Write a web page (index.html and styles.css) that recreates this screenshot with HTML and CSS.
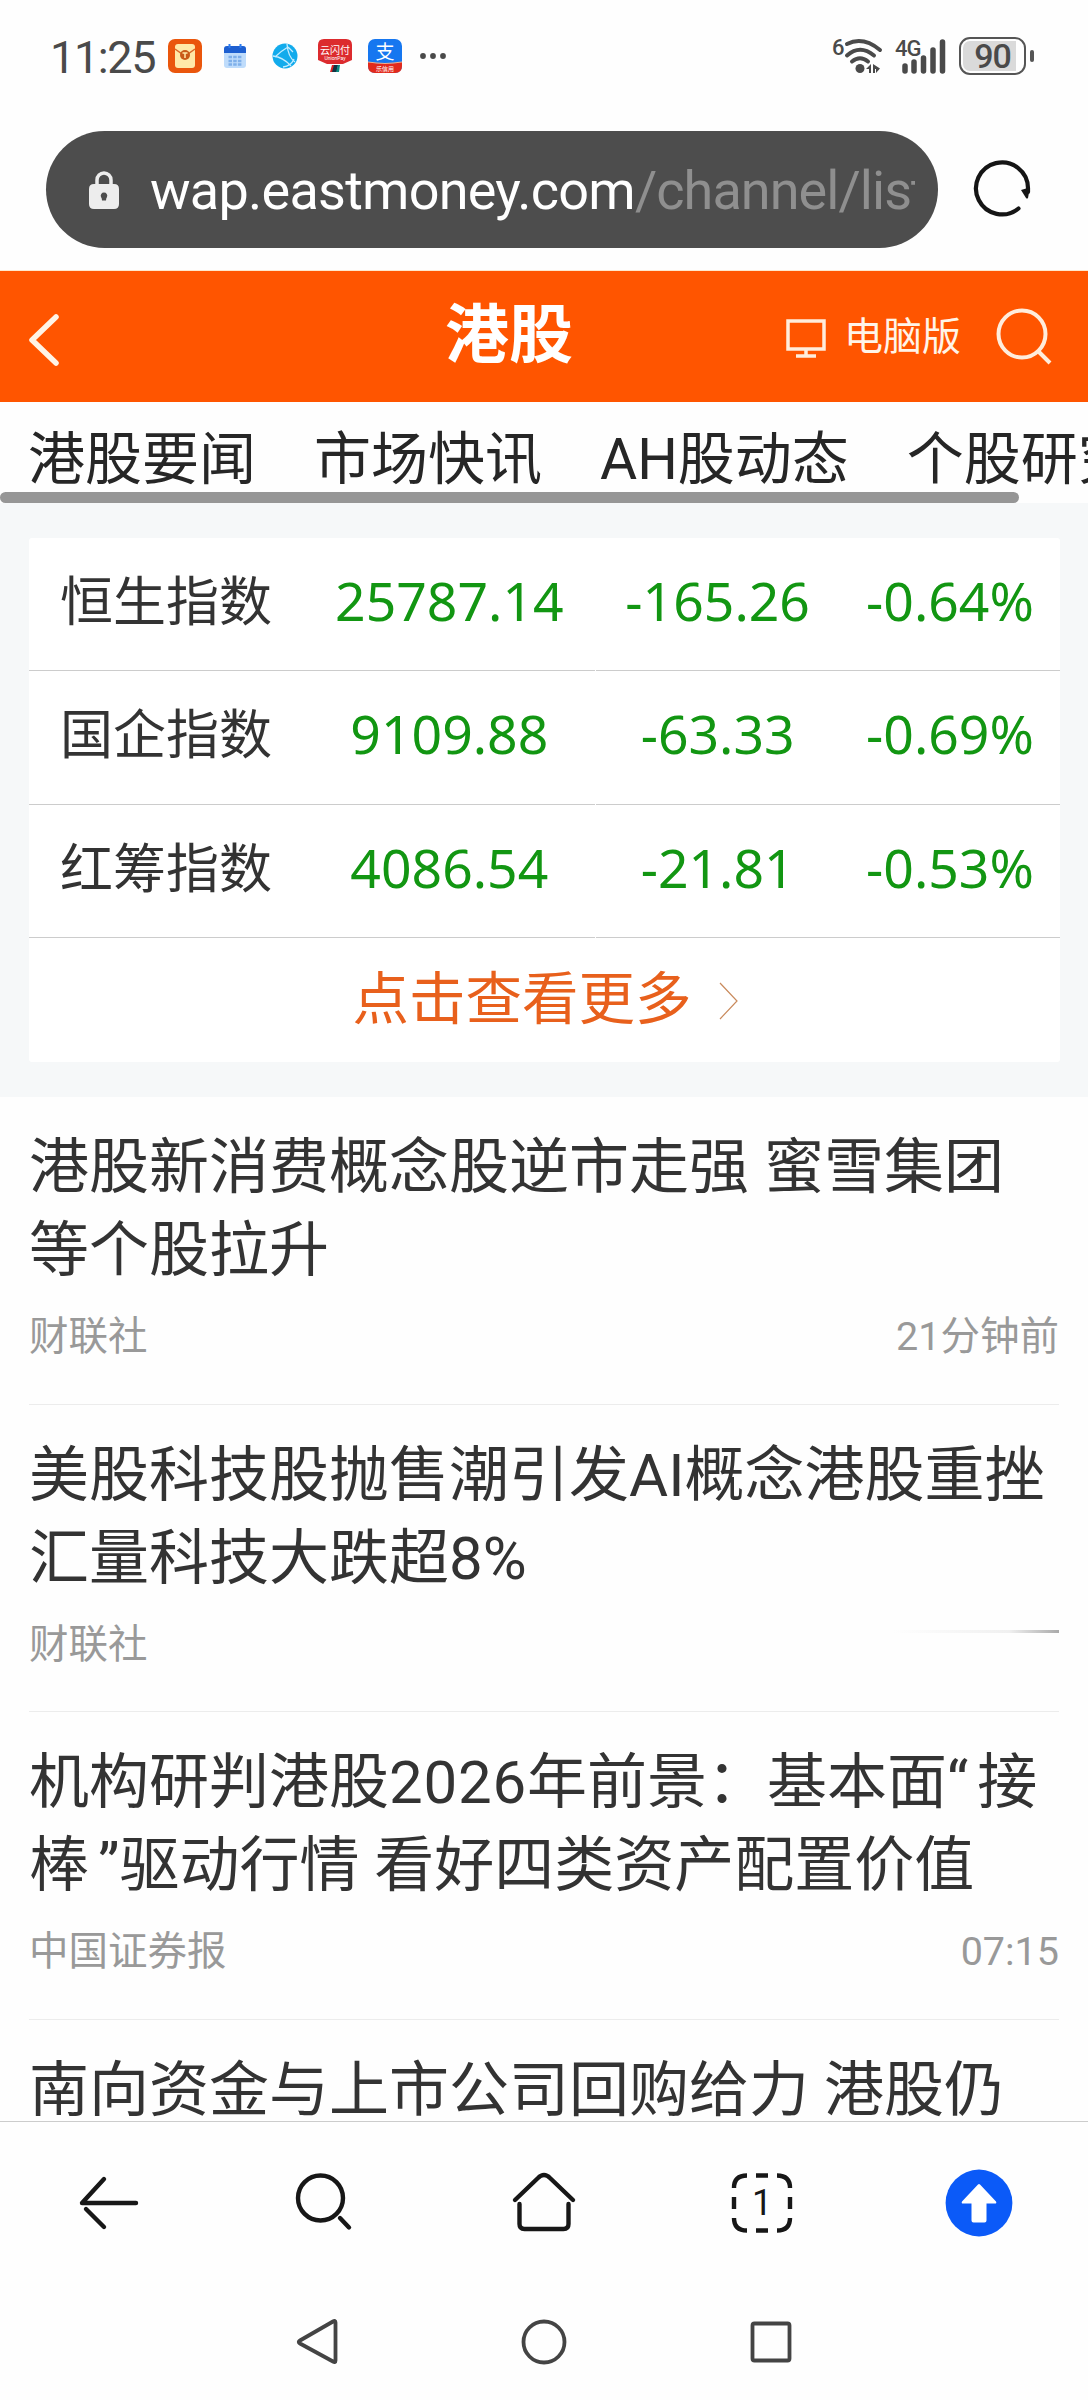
FILE: index.html
```html
<!DOCTYPE html>
<html lang="zh-CN">
<head>
    <meta charset="UTF-8">
    <meta name="viewport" content="width=device-width, initial-scale=1.0">
    <title>港股</title>
    <link rel="stylesheet" href="styles.css">
</head>
<body>
    <div class="status-bar">
        <span class="clock">11:25</span>
        <div class="notices">
            <svg class="app-icon" viewBox="0 0 34 34">
                <rect width="34" height="34" rx="7" fill="#ea560c"/>
                <rect x="7" y="5" width="20" height="24" rx="3" fill="#ffe9a8"/>
                <path d="M7 10l10 7 10-7" fill="none" stroke="#d9692a" stroke-width="1.5"/>
                <circle cx="17" cy="16" r="5" fill="#c95a18"/>
                <path d="M14.500 14h5M17 14v5" stroke="#ffe9a8" stroke-width="1.500"/>
            </svg>
            <svg class="app-icon" viewBox="0 0 34 34">
                <rect x="6" y="7" width="22" height="22" rx="3" fill="#bfdcfb"/>
                <path d="M6 14V10q0-3 3-3h16q3 0 3 3v4z" fill="#1d5fd0"/>
                <path d="M11.500 5v4M22.500 5v4" stroke="#2f7df0" stroke-width="2"/>
                <path d="M10.500 18h13M10.500 22h13M10.500 25.500h13" stroke="#7fb0ea" stroke-width="2.500" stroke-dasharray="3.500 1.200"/>
            </svg>
            <svg class="app-icon" viewBox="0 0 34 34">
                <circle cx="17" cy="17" r="12.500" fill="#12abec"/>
                <path d="M19 5Q20 18 27 23M5 17Q15 18 23 27M7 18Q13 12 20 8M20 8l5 5M15 28q8-1 11-8" fill="none" stroke="#c4ecff" stroke-width="1.300"/>
            </svg>
            <svg class="app-icon" viewBox="0 0 34 34">
                <path d="M6 0h22q6 0 6 6v15l-9 4H9l-9-4V6q0-6 6-6z" fill="#dc2b2e"/>
                <path d="M14 26h3l-2 7h-3z" fill="#d22"/>
                <path d="M16 26h4l-1 7h-5z" fill="#134"/>
                <path d="M20 26h2l-1 7h-3z" fill="#0a8a80"/>
                <text x="17" y="14.500" class="icon-text" font-size="10">云闪付</text>
                <text x="17" y="21" class="icon-text" font-size="5">UnionPay</text>
            </svg>
            <svg class="app-icon" viewBox="0 0 34 34">
                <rect width="34" height="34" rx="7" fill="#1677f0"/>
                <path d="M0 23q17 3 34 0v4q0 7-7 7H7q-7 0-7-7z" fill="#e22a1c"/>
                <path d="M0 23q17 3 34 0" fill="none" stroke="#f3b08a" stroke-width="1.200"/>
                <text x="17" y="20" class="icon-text" font-size="19">支</text>
                <text x="17" y="31.500" class="icon-text" font-size="6">乐信用</text>
            </svg>
            <svg class="more" viewBox="0 0 26 34">
                <circle cx="3" cy="17" r="2.900"/>
                <circle cx="13" cy="17" r="2.900"/>
                <circle cx="23" cy="17" r="2.900"/>
            </svg>
        </div>
        <div class="signals">
            <svg class="wifi" viewBox="0 0 50 38">
                <text x="-1" y="17.500" class="signal-text" font-size="22">6</text>
                <g fill="none" stroke="#4a4a4a" stroke-width="4" stroke-linecap="round">
                    <path d="M14 7Q30-1 47 13"/>
                    <path d="M14 18.500Q27 7 41 18.500"/>
                    <path d="M19 24.500Q27 18 35 24.500"/>
                </g>
                <circle cx="27" cy="31.500" r="4.500" fill="#4a4a4a"/>
                <path d="M33 32l5-5v9h-2v-4zM40 27l7 4.500-4 4.500v-4h-1v4h-2z" fill="#4a4a4a"/>
            </svg>
            <svg class="cell" viewBox="0 0 52 38">
                <text x="0" y="18.500" class="signal-text" font-size="22">4G</text>
                <path d="M10 29v5M19 25v9M28.500 21v13M38 13v21M47.500 5v29" fill="none" stroke="#4a4a4a" stroke-width="5.500" stroke-linecap="round"/>
            </svg>
            <div class="battery"><span class="level">90</span></div>
            <span class="battery-tip"></span>
        </div>
    </div>

    <div class="address-bar">
        <div class="url-box">
            <svg class="lock" viewBox="0 0 30 38">
                <path d="M8 15V9a7 7 0 0 1 14 0v6" fill="none" stroke="#ededed" stroke-width="3.500"/>
                <path fill-rule="evenodd" d="M5 13h20q5 0 5 5v15q0 5-5 5H5q-5 0-5-5V18q0-5 5-5zM15 21.500a3.200 3.200 0 0 0-3 4.500q1 1 1 3.500h4q0-2.500 1-3.500a3.200 3.200 0 0 0-3-4.500z" fill="#ededed"/>
            </svg>
            <div class="url">wap.eastmoney.com<span class="path">/channel/list</span></div>
        </div>
        <svg class="reload" viewBox="0 0 60 60">
            <path d="M46.500 49.500A26 26 0 1 1 56 29V33" fill="none" stroke="#151515" stroke-width="4.200" stroke-linecap="round"/>
            <path d="M49 31q4-1 9-3l-2 11q-1 1-2 0z" fill="#151515"/>
        </svg>
    </div>

    <div class="page">
        <div class="header">
            <svg class="back" viewBox="0 0 32 54">
                <path d="M29 4L5 27l24 23" fill="none" stroke="#fff4e6" stroke-width="5.500" stroke-linecap="round" stroke-linejoin="round"/>
            </svg>
            <h1>港股</h1>
            <div class="header-tools">
                <svg class="monitor" viewBox="0 0 40 40">
                    <path d="M2 2h36v28H2zM20 30v7M10 37h20" fill="none" stroke="#ffeddc" stroke-width="3.500"/>
                </svg>
                <span>电脑版</span>
                <svg class="find" viewBox="0 0 58 60">
                    <circle cx="26" cy="27" r="23.500"/>
                    <path d="M42 44l12 12"/>
                </svg>
            </div>
        </div>

        <div class="tabs">
            <span>港股要闻</span>
            <span>市场快讯</span>
            <span>AH股动态</span>
            <span>个股研究</span>
            <div class="scrollbar"></div>
        </div>

        <div class="quotes">
            <div class="quote-card">
                <div class="row">
                    <span>恒生指数</span><b>25787.14</b><b>-165.26</b><b>-0.64%</b>
                </div>
                <div class="row">
                    <span>国企指数</span><b>9109.88</b><b>-63.33</b><b>-0.69%</b>
                </div>
                <div class="row">
                    <span>红筹指数</span><b>4086.54</b><b>-21.81</b><b>-0.53%</b>
                </div>
                <div class="see-more">
                    <span>点击查看更多</span>
                    <svg viewBox="0 0 19 38"><path d="M1 1l17 18L1 37"/></svg>
                </div>
            </div>
        </div>

        <div class="news">
            <div class="item">
                <h2>港股新消费概念股逆市走强 蜜雪集团<br>等个股拉升</h2>
                <div class="meta"><span>财联社</span><span>21分钟前</span></div>
            </div>
            <div class="item">
                <h2>美股科技股抛售潮引发AI概念港股重挫<br>汇量科技大跌超8%</h2>
                <div class="meta"><span>财联社</span><span class="fading"></span></div>
            </div>
            <div class="item">
                <h2>机构研判港股<span class="num">2026</span>年前景：基本面<span class="quote-open">“</span>接<br>棒<span class="quote-close">”</span>驱动行情 看好四类资产配置价值</h2>
                <div class="meta"><span>中国证券报</span><span>07:15</span></div>
            </div>
            <div class="item">
                <h2>南向资金与上市公司回购给力 港股仍</h2>
            </div>
        </div>
    </div>

    <div class="toolbar">
        <svg viewBox="0 0 76 76">
            <path d="M65 38H11L33 14M15 44l18 18"/>
        </svg>
        <svg viewBox="0 0 76 76">
            <circle cx="32.500" cy="33" r="22.500"/>
            <path d="M52 53l9 9.500"/>
        </svg>
        <svg viewBox="0 0 76 76">
            <path d="M9 35l23-22q6-6 12 0l23 22M13.500 39v20q0 5 5 5h39q5 0 5-5V39"/>
        </svg>
        <svg viewBox="0 0 76 76">
            <path class="butt" d="M10 23q0-12.500 13-12.500M53 10.500q13 0 13 12.500M66 53q0 12.500-13 12.500M23 65.500q-13 0-13-12.500M32 10.500h12M32 65.500h12M10 32v12M66 32v12"/>
            <text x="38" y="49.500" class="tab-count">1</text>
        </svg>
        <svg viewBox="0 0 76 76">
            <circle class="top-circle" cx="38" cy="38" r="33.400"/>
            <path class="top-arrow" d="M37 19.500q1-1 2 0l16 17q1 2-1 2h-8.500v17q0 2-2 2h-11q-2 0-2-2v-17H22q-2 0-1-2z"/>
        </svg>
    </div>
    <div class="nav-bar">
        <svg viewBox="0 0 48 48"><path d="M40 3.500q2.500-1.500 2.500 1v38q0 2.500-2.500 1L7 25.500q-2.500-1.500 0-3z"/></svg>
        <svg viewBox="0 0 48 48"><circle cx="24" cy="24" r="20.500"/></svg>
        <svg viewBox="0 0 48 48"><rect x="5.500" y="5.500" width="37" height="37" rx="2"/></svg>
    </div>
</body>
</html>
```

FILE: styles.css
```css
* {
    box-sizing: border-box;
}
body {
    margin: 0;
    width: 1088px;
    height: 2400px;
    overflow: hidden;
    display: flex;
    flex-direction: column;
    background-color: #fefefe;
    font-family: Roboto, "Noto Sans CJK SC", sans-serif;
    color: #333;
}
h1, h2 {
    margin: 0;
}
svg {
    display: block;
    flex-shrink: 0;
}

/* status bar */
.status-bar {
    height: 112px;
    padding: 0 54px 0 50px;
    display: flex;
    align-items: center;
    color: #4a4a4a;
}
.clock {
    width: 118px;
    font-size: 45px;
    line-height: 50px;
    letter-spacing: -1.4px;
    padding-top: 3px;
}
.notices {
    display: flex;
    gap: 16px;
}
.app-icon {
    width: 34px;
    height: 34px;
}
.icon-text {
    fill: #fff;
    text-anchor: middle;
}
.more {
    width: 26px;
    height: 34px;
    margin-left: 2px;
    fill: #4a4a4a;
}
.signals {
    margin-left: auto;
    display: flex;
    align-items: center;
}
.signal-text {
    fill: #4a4a4a;
    font-weight: 500;
    letter-spacing: -1px;
}
.wifi {
    width: 50px;
    height: 38px;
    overflow: visible;
}
.cell {
    width: 52px;
    height: 38px;
    margin: 0 12px;
}
.battery {
    width: 67px;
    height: 38px;
    padding: 2px 8px 2px 2px;
    border: 2.5px solid #555;
    border-radius: 11px;
}
.level {
    display: block;
    height: 100%;
    padding-left: 6px;
    border-radius: 7px 0 0 7px;
    background-color: #dadada;
    font-size: 34px;
    font-weight: 500;
    line-height: 31px;
    letter-spacing: -1px;
    text-align: center;
}
.battery-tip {
    width: 4px;
    height: 12px;
    margin-left: 4px;
    border-radius: 2px;
    background-color: #555;
}

/* address bar */
.address-bar {
    height: 159px;
    padding: 19px 56px 0 46px;
    display: flex;
    align-items: flex-start;
    justify-content: space-between;
    border-bottom: 1px solid #ffe8cc;
}
.url-box {
    width: 892px;
    height: 117px;
    padding: 0 23px 0 43px;
    display: flex;
    align-items: center;
    border-radius: 59px;
    background-color: #4d4d4d;
}
.lock {
    width: 30px;
    height: 38px;
    margin-right: 31px;
}
.url {
    flex: 1;
    overflow: hidden;
    white-space: nowrap;
    color: #fff;
    font-size: 54px;
    line-height: 76px;
    letter-spacing: -0.75px;
    padding-top: 3px;
}
.path {
    color: #8f8f8f;
    letter-spacing: -0.95px;
}
.reload {
    width: 60px;
    height: 60px;
    margin-top: 28px;
}

/* page */
.page {
    height: 1850px;
    overflow: hidden;
}
.header {
    height: 131px;
    padding: 0 34px 0 27px;
    display: grid;
    grid-template-columns: 418px 1fr auto;
    align-items: center;
    background-color: #ff5500;
    color: #fff;
}
.back {
    width: 32px;
    height: 54px;
    margin-top: 6px;
}
.header h1 {
    font-size: 64px;
    line-height: 90px;
    margin-bottom: 2px;
}
.header-tools {
    display: flex;
    align-items: center;
    font-size: 39px;
    line-height: 56px;
    color: #fff4e8;
}
.monitor {
    width: 40px;
    height: 40px;
    margin: 5px 18px 0 0;
}
.find {
    width: 58px;
    height: 60px;
    margin-left: 35px;
    fill: none;
    stroke: #ffeddc;
    stroke-width: 4;
}
.tabs {
    position: relative;
    height: 101px;
    padding: 16px 0 0 28px;
    display: flex;
    gap: 58px;
    overflow: hidden;
    white-space: nowrap;
    font-size: 57px;
    line-height: 84px;
    color: #262626;
}
.scrollbar {
    position: absolute;
    left: 0;
    bottom: 0;
    width: 1019px;
    height: 11px;
    border-radius: 6px;
    background-color: #969696;
}
.quotes {
    height: 594px;
    padding: 35px 28px 0 29px;
    background-color: #f6f8f9;
}
.quote-card {
    height: 524px;
    background-color: #fff;
    border-radius: 3px;
}
.row {
    height: 133.4px;
    display: grid;
    grid-template-columns: 274px 292px 244px 220px;
    column-gap: 0.33px;
    text-align: center;
    font-size: 53px;
}
.row span,
.row b {
    height: 133.4px;
    line-height: 130px;
    border-bottom: 1px solid #ccc;
}
.row span {
    padding-left: 31px;
    text-align: left;
}
.row b {
    font-family: "Noto Sans", sans-serif;
    font-size: 53.5px;
    font-weight: normal;
    line-height: 126px;
    color: #129612;
}
.see-more {
    height: 119px;
    padding: 4px 0 0 1px;
    display: flex;
    align-items: center;
    justify-content: center;
    gap: 27px;
    font-size: 56.500px;
    line-height: 80px;
    color: #e8601c;
}
.see-more svg {
    width: 19px;
    height: 38px;
    margin-top: 3px;
    fill: none;
    stroke: #c98a5c;
    stroke-width: 1.2;
}
.news {
    padding: 0 29px 0 29px;
}
.item {
    height: 307.67px;
    padding-top: 29px;
    border-bottom: 1px solid #ececec;
}
.item h2 {
    font-size: 60px;
    font-weight: normal;
    line-height: 83px;
    white-space: nowrap;
}
.num {
    letter-spacing: 0.8px;
}
.quote-open {
    margin-right: 9px;
}
.quote-close {
    margin-left: 9px;
}
.meta {
    margin-top: 17px;
    display: flex;
    justify-content: space-between;
    font-size: 39.5px;
    line-height: 56px;
    color: #999;
}
.fading {
    width: 166px;
    height: 3px;
    margin-top: 13px;
    background: linear-gradient(to right, #fefefe, #f0f0f0 70%, #aaa);
}

/* browser toolbar and system navigation */
.toolbar {
    height: 163px;
    display: grid;
    grid-template-columns: repeat(5, 1fr);
    align-items: center;
    justify-items: center;
    border-top: 1px solid #ccc;
    background-color: #fefefe;
}
.toolbar svg {
    width: 76px;
    height: 76px;
    fill: none;
    stroke: #171717;
    stroke-width: 4.4;
    stroke-linecap: round;
    stroke-linejoin: round;
}
.toolbar .butt {
    stroke-linecap: butt;
}
.toolbar .tab-count {
    fill: #171717;
    stroke: none;
    font-size: 36px;
    text-anchor: middle;
}
.toolbar .top-circle {
    fill: #0b5af8;
    stroke: none;
}
.toolbar .top-arrow {
    fill: #fff;
    stroke: none;
}
.nav-bar {
    height: 116px;
    display: flex;
    justify-content: center;
    align-items: center;
    gap: 179px;
}
.nav-bar svg {
    width: 48px;
    height: 48px;
    fill: none;
    stroke: #444;
    stroke-width: 3.8;
}
```
